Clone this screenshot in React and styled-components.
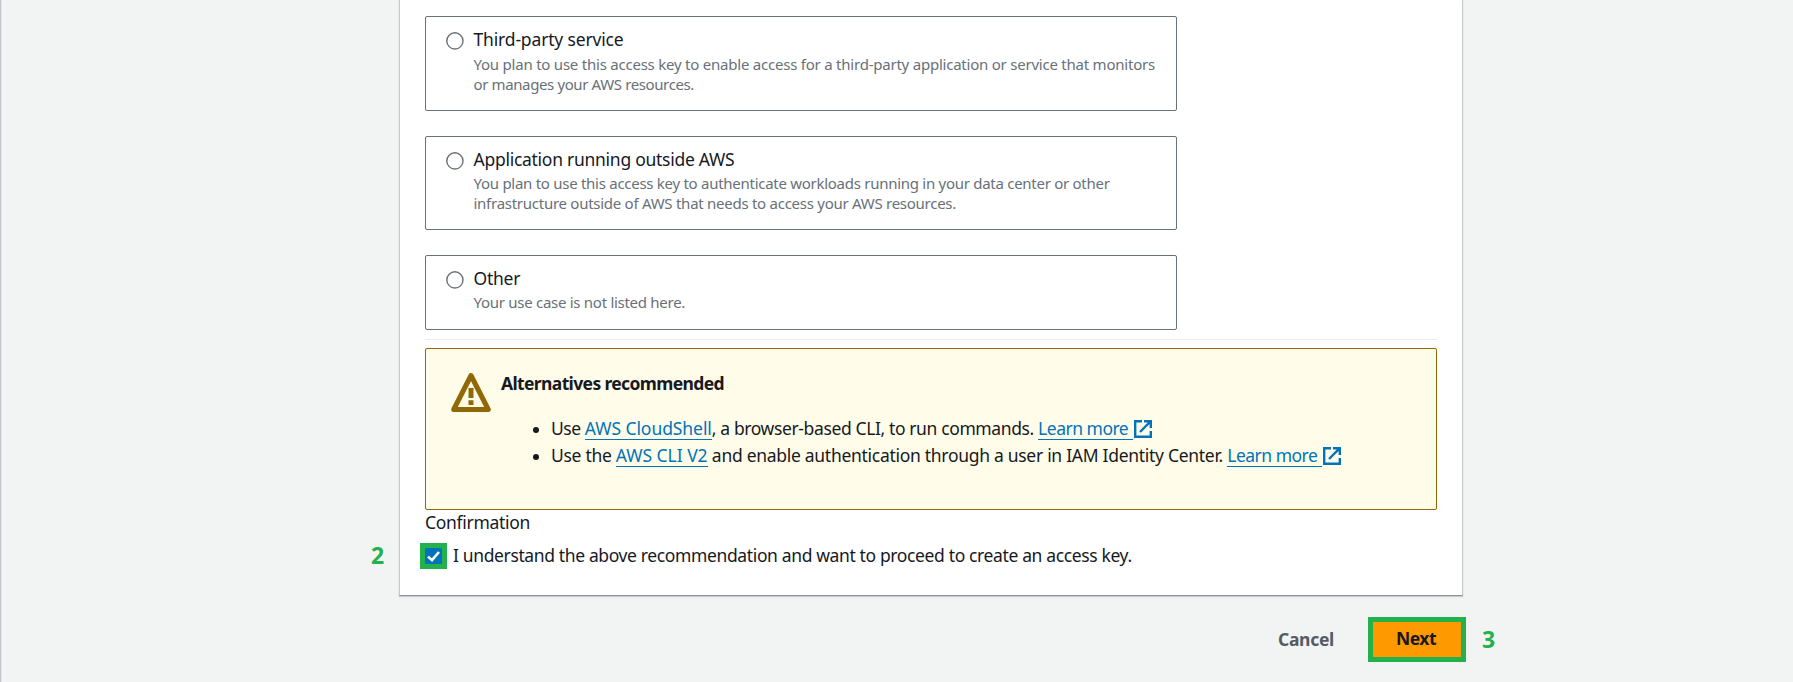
import React from 'react';
import styled, { createGlobalStyle } from 'styled-components';

const GlobalStyle = createGlobalStyle`
  *, *::before, *::after { box-sizing: border-box; }
  body {
    margin: 0;
    background: #f2f3f3;
    color: #16191f;
    font-family: "Noto Sans", "Open Sans", sans-serif;
    font-size: 17.5px;
    line-height: 27px;
    overflow: hidden;
  }
`;

const Page = styled.main`
  height: 682px;
  overflow: hidden;
  border-left: 1px solid #bfc5cb;
  box-shadow: inset 1px 0 0 #e4e7e9;
  padding-left: 398px;
`;

const Card = styled.section`
  width: 1064px;
  height: 596px;
  padding: 16px 25px 0;
  background: #fff;
  border: 1px solid #c3c8cb;
  border-top: 0;
  border-bottom-color: #879196;
  box-shadow: 0 1px 1px #c9cecf;
`;

const Text = styled.span`
  letter-spacing: ${(p) => p.$track || 0}px;
  white-space: pre;
`;

const Tiles = styled.div`
  display: flex;
  flex-direction: column;
  gap: 25px;
  width: 752px;
`;

const Tile = styled.label`
  display: flex;
  height: ${(p) => p.$height}px;
  padding: 9px 20px 0;
  border: 1px solid #687078;
  border-radius: 2px;
`;

const Radio = styled.svg`
  flex: none;
  width: 18px;
  height: 18px;
  margin: 6px 9.5px 0 0;
`;

const TileBody = styled.div`
  display: flex;
  flex-direction: column;
  gap: ${(p) => p.$gap}px;
`;

const Description = styled.div`
  display: flex;
  flex-direction: column;
  color: #687078;
  font-size: 15px;
  line-height: 20px;
`;

const Divider = styled.hr`
  height: 1px;
  margin: 9px 0 8px;
  border: 0;
  background: #eaeded;
`;

const Alert = styled.section`
  display: flex;
  height: 162px;
  padding: 21px 24px;
  border: 1px solid #906806;
  border-radius: 2px;
  background: #fffce9;
`;

const WarningIcon = styled.svg`
  flex: none;
  width: 42px;
  height: 42px;
  margin: 1px 9px 0 0;
`;

const AlertTitle = styled.h2`
  margin: 0;
  font-size: 17.5px;
  font-weight: 700;
  line-height: 27px;
`;

const AlertList = styled.ul`
  margin: 18px 0 0;
  padding: 0;
  list-style: none;
`;

const AlertItem = styled.li`
  display: flex;
  align-items: flex-start;
  height: 27px;

  &::before {
    content: "";
    flex: none;
    width: 6px;
    height: 6px;
    margin: 12px 12px 0 32px;
    border-radius: 50%;
    background: #16191f;
  }
`;

const Link = styled.a`
  height: 25px;
  color: #0073bb;
  border-bottom: 1px solid #0073bb;
  white-space: pre;
  padding-right: ${(p) => (p.$external ? 5 : 0)}px;
`;

const ExternalIcon = styled.svg`
  flex: none;
  width: 18px;
  height: 18px;
  margin: 5px 0 0 1px;
`;

const Confirmation = styled.div`
  line-height: 24px;
`;

const CheckRow = styled.label`
  position: relative;
  display: flex;
  align-items: flex-start;
  gap: 6px;
  height: 26px;
  margin: 9px 0 0 -5px;
  line-height: 24px;
`;

const CheckHighlight = styled.span`
  display: flex;
  flex: none;
  width: 27px;
  height: 26px;
  padding: 5px;
  background: #22b14c;
`;

const Checkbox = styled.svg`
  width: 17px;
  height: 16px;
`;

const Actions = styled.footer`
  position: relative;
  display: flex;
  justify-content: flex-end;
  align-items: center;
  width: 1067px;
  margin-top: 21px;
  font-weight: 700;
`;

const CancelButton = styled.button`
  margin-right: 34px;
  padding: 0;
  border: 0;
  background: none;
  color: #545b64;
  font: inherit;
`;

const NextButton = styled.button`
  width: 98px;
  height: 45px;
  padding: 0 2px 2px 0;
  border: 5px solid #22b14c;
  background: #ff9900;
  color: #16191f;
  font: inherit;
`;

const StepNumber = styled.span`
  position: absolute;
  left: ${(p) => p.$left}px;
  top: ${(p) => p.$top}px;
  color: #22b14c;
  font-size: 23px;
  font-weight: 700;
  line-height: 26px;
`;

const options = [
  {
    title: ['Third-party service', -0.16],
    lines: [
      ['You plan to use this access key to enable access for a third-party application or service that monitors', -0.225],
      ['or manages your AWS resources.', -0.38],
    ],
    height: 95,
    gap: 1,
  },
  {
    title: ['Application running outside AWS', -0.27],
    lines: [
      ['You plan to use this access key to authenticate workloads running in your data center or other', -0.275],
      ['infrastructure outside of AWS that needs to access your AWS resources.', -0.265],
    ],
    height: 94,
    gap: 0,
  },
  {
    title: ['Other', -0.25],
    lines: [['Your use case is not listed here.', -0.28]],
    height: 75,
    gap: 0,
  },
];

function LearnMore() {
  return (
    <>
      <Link $external><Text $track={-0.5}>Learn more</Text></Link>
      <ExternalIcon viewBox="0 0 18 18" fill="none" stroke="#0073bb" strokeWidth="2.4">
        <path d="M8 1.2H1.2v15.6h15.6V11" />
        <path d="M10 1.2h6.8V8M16.8 1.2L6 12" />
      </ExternalIcon>
    </>
  );
}

export default function App() {
  return (
    <>
      <GlobalStyle />
      <Page>
        <Card>
          <Tiles>
            {options.map(({ title, lines, height, gap }) => (
              <Tile key={title[0]} $height={height}>
                <Radio viewBox="0 0 18 18">
                  <circle cx="8.9" cy="8.9" r="8.1" fill="#fff" stroke="#687078" strokeWidth="1.4" />
                </Radio>
                <TileBody $gap={gap}>
                  <Text $track={title[1]}>{title[0]}</Text>
                  <Description>
                    {lines.map(([line, track]) => (
                      <Text key={line} $track={track}>{line}</Text>
                    ))}
                  </Description>
                </TileBody>
              </Tile>
            ))}
          </Tiles>
          <Divider />
          <Alert>
            <WarningIcon viewBox="0 0 42 42">
              <path d="M21 4.5L38.3 38.5H3.7Z" fill="none" stroke="#906806" strokeWidth="5" strokeLinejoin="round" />
              <path d="M18.5 17h5v10h-5zM18.5 29.3h5v4.7h-5z" fill="#906806" />
            </WarningIcon>
            <div>
              <AlertTitle><Text $track={-0.63}>Alternatives recommended</Text></AlertTitle>
              <AlertList>
                <AlertItem>
                  <Text $track={-0.45}>{'Use '}</Text>
                  <Link><Text $track={-0.07}>AWS CloudShell</Text></Link>
                  <Text $track={-0.38}>{', a browser-based CLI, to run commands. '}</Text>
                  <LearnMore />
                </AlertItem>
                <AlertItem>
                  <Text $track={-0.3}>{'Use the '}</Text>
                  <Link><Text $track={-0.03}>AWS CLI V2</Text></Link>
                  <Text $track={-0.29}>{' and enable authentication through a user in IAM Identity Center. '}</Text>
                  <LearnMore />
                </AlertItem>
              </AlertList>
            </div>
          </Alert>
          <Confirmation><Text $track={-0.3}>Confirmation</Text></Confirmation>
          <CheckRow>
            <StepNumber $left={-49} $top={-1}>2</StepNumber>
            <CheckHighlight>
              <Checkbox viewBox="0 0 17 16">
                <rect width="17" height="16" rx="1.5" fill="#0073bb" />
                <path d="M3 8.6l4 3.6L14 4" fill="none" stroke="#fff" strokeWidth="2.6" />
              </Checkbox>
            </CheckHighlight>
            <Text $track={-0.37}>I understand the above recommendation and want to proceed to create an access key.</Text>
          </CheckRow>
        </Card>
        <Actions>
          <CancelButton><Text $track={-0.3}>Cancel</Text></CancelButton>
          <NextButton><Text $track={-0.5}>Next</Text></NextButton>
          <StepNumber $left={1083} $top={9}>3</StepNumber>
        </Actions>
      </Page>
    </>
  );
}
